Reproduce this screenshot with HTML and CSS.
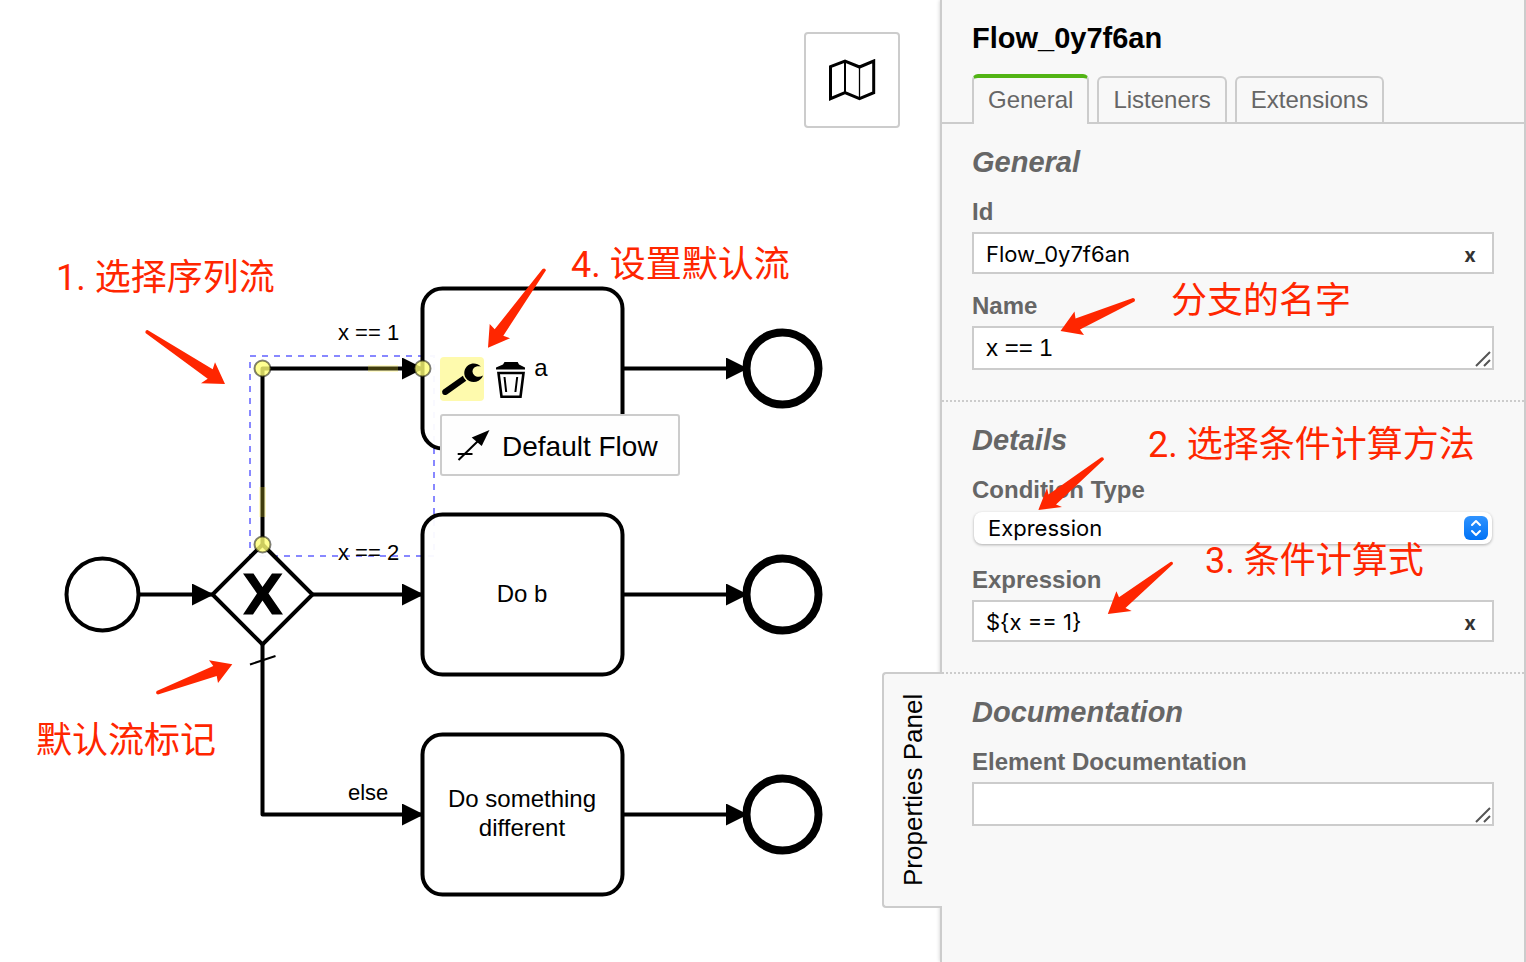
FILE: index.html
```html
<!DOCTYPE html>
<html lang="zh-CN">
<head>
<meta charset="utf-8">
<title>Process Modeler</title>
<link rel="stylesheet" href="styles.css">
</head>
<body>
<div class="modeler">
  <main class="canvas">
    <svg class="diagram" width="940" height="962" viewBox="0 0 940 962" role="img" aria-label="Process diagram">
      <defs>
        <marker id="flow-end" viewBox="0 0 22 22" refX="20" refY="11" markerWidth="22" markerHeight="22" markerUnits="userSpaceOnUse" orient="auto">
          <path d="M0 0L22 11L0 22z"/>
        </marker>
      </defs>
      <rect class="outline" x="250" y="356" width="184" height="200"/>
      <g class="shape">
        <circle cx="102.500" cy="594.500" r="36"/>
        <path d="M262.500 544.500l50 50l-50 50l-50-50z"/>
        <rect x="422.500" y="288.500" width="200" height="160" rx="20"/>
        <rect x="422.500" y="514.500" width="200" height="160" rx="20"/>
        <rect x="422.500" y="734.500" width="200" height="160" rx="20"/>
      </g>
      <g class="shape shape-end">
        <circle cx="782.500" cy="368.500" r="36"/>
        <circle cx="782.500" cy="594.500" r="36"/>
        <circle cx="782.500" cy="814.500" r="36"/>
      </g>
      <path d="M243 573.500h10.500l9 13.500l9.500-13.500h10.500L268.500 593.500L283 614.500H272L262.500 600.500L253 614.500H243L257 593.500z"/>
      <g class="flow">
        <path d="M140 594.500H212"/>
        <path d="M262.500 544.500V368.500H422"/>
        <path d="M312.500 594.500H422"/>
        <path d="M262.500 644.500V814.500H422"/>
        <path d="M622.500 368.500H746"/>
        <path d="M622.500 594.500H746"/>
        <path d="M622.500 814.500H746"/>
      </g>
      <path class="default-mark" d="M250 664.500L275.500 656"/>
      <rect class="dragger" x="368" y="365" width="30" height="7"/>
      <rect class="dragger" x="259" y="487" width="7" height="30"/>
      <g class="bendpoint">
        <circle cx="262.500" cy="368.500" r="8"/>
        <circle cx="422.500" cy="368.500" r="8"/>
        <circle cx="262.500" cy="544.500" r="8"/>
      </g>
      <g class="flow-label">
        <text x="338" y="340">x == 1</text>
        <text x="338" y="560">x == 2</text>
        <text x="348" y="800">else</text>
      </g>
      <g class="task-label">
        <text x="541" y="376">a</text>
        <text x="522" y="602">Do b</text>
        <text x="522" y="807">Do something</text>
        <text x="522" y="836">different</text>
      </g>
    </svg>

    <button class="minimap" type="button" aria-label="Open minimap">
      <svg width="48" height="42" viewBox="828 59 48 42">
        <path d="M830.500 66.700L845 61L859.500 67L873.700 61V92.700L859.500 98.700L845 92.700L830.500 98.700z" fill="none" stroke="#000" stroke-width="3"/>
        <path d="M845 61V93" stroke="#000" stroke-width="2"/><path d="M859.500 67V98" stroke="#000" stroke-width="1.300"/>
      </svg>
    </button>

    <div class="context-pad">
      <button class="entry entry-active" type="button" aria-label="Change type">
        <svg width="44" height="44" viewBox="440 357 44 44">
          <path d="M443 389.800L462.900 375.800Q463.800 378.800 466.300 380.700L447 394.500Q444 396 442.400 393.500Q441.500 391 443 389.800z"/>
          <path d="M480.900 366.400C477.500 363 472 362.600 468.200 365.200C464 368.200 463.200 374 465.800 378C468.500 382.200 474.300 383.300 478.600 380.800C481 379.400 482.500 377.500 482.900 375.600C480 377.300 476.500 377.200 474.300 375.200C472 373 471.900 370 473.800 368C475.500 366.200 478 365.800 480.900 366.400z"/>
        </svg>
      </button>
      <button class="entry" type="button" aria-label="Remove">
        <svg width="36" height="44" viewBox="492 357 36 44">
          <path d="M504.500 362H517.700L519 364.500L525 367.500V369.500H496V367.500L503 364.500z"/>
          <path d="M498.500 373H523.500L520.500 396.700H501.500z" fill="none" stroke="#000" stroke-width="2.600"/>
          <path d="M504.500 377L506.200 392M517.200 377L515.400 392" stroke="#000" stroke-width="2"/>
        </svg>
      </button>
    </div>

    <button class="popup" type="button">
      <svg width="34" height="34" viewBox="456 430 34 34">
        <path d="M458.500 460L478 441M457.700 454H472.500" fill="none" stroke="#000" stroke-width="2"/>
        <path d="M489.500 430L471.700 437.500L481.700 446z"/>
      </svg>
      <span>Default Flow</span>
    </button>

    <svg class="notes" width="940" height="962" viewBox="0 0 940 962">
      <path d="M147.500 330L212.700 369.300L215 362.300L225 384L201 383.300L207.700 378.700L145.500 333Q145 330 147.500 330z"/>
      <path d="M546 270.300L503.300 335.700L510 338.300L488 347.700L489.700 324L494.700 329.300L542.500 269Q545 267.500 546 270.300z"/>
      <path d="M156.700 691L213.300 666L209 660.300L232.300 664.300L218 683L216.700 676L158 694.500Q155 693.500 156.700 691z"/>
      <text x="56" y="290">1. 选择序列流</text>
      <text x="571" y="277">4. 设置默认流</text>
      <text x="36" y="753">默认流标记</text>
    </svg>
  </main>

  <aside class="panel">
    <button class="panel-toggle" type="button">Properties Panel</button>
    <h1 class="panel-title">Flow_0y7f6an</h1>
    <nav class="tabs">
      <a class="tab tab-active" href="#general">General</a>
      <a class="tab" href="#listeners">Listeners</a>
      <a class="tab" href="#extensions">Extensions</a>
    </nav>
    <form>
      <section class="group">
        <h2>General</h2>
        <div class="field">
          <label for="flow-id">Id</label>
          <div class="control">
            <input id="flow-id" type="text" value="Flow_0y7f6an">
            <button class="clear" type="button" aria-label="Clear id">x</button>
          </div>
        </div>
        <div class="field">
          <label for="flow-name">Name</label>
          <div class="control">
            <textarea id="flow-name" rows="1">x == 1</textarea>
            <svg class="grip" width="16" height="16" viewBox="0 0 16 16"><path d="M1 15L15 1M9 15L15 9"/></svg>
          </div>
        </div>
      </section>
      <section class="group">
        <h2>Details</h2>
        <div class="field">
          <label for="condition-type">Condition Type</label>
          <div class="control control-select">
            <select id="condition-type"><option>Expression</option></select>
            <svg class="stepper" width="24" height="24" viewBox="0 0 24 24"><path d="M8 9L12 5L16 9M8 15L12 19L16 15"/></svg>
          </div>
        </div>
        <div class="field">
          <label for="expression">Expression</label>
          <div class="control">
            <input id="expression" type="text" value="${x == 1}">
            <button class="clear" type="button" aria-label="Clear expression">x</button>
          </div>
        </div>
      </section>
      <section class="group">
        <h2>Documentation</h2>
        <div class="field">
          <label for="documentation">Element Documentation</label>
          <div class="control">
            <textarea id="documentation" rows="1"></textarea>
            <svg class="grip" width="16" height="16" viewBox="0 0 16 16"><path d="M1 15L15 1M9 15L15 9"/></svg>
          </div>
        </div>
      </section>
    </form>
    <svg class="notes" width="582" height="962" viewBox="942 0 582 962">
      <path d="M1134.500 301.500L1080 329.500L1084 335L1060.500 331L1074.500 311.500L1075.500 318.500L1133 298Q1136 298.500 1134.500 301.500z"/>
      <path d="M1104 459.500L1056 504.500L1062 507L1038.300 510L1047 488L1048.500 494.500L1101 457.500Q1103.500 456.500 1104 459.500z"/>
      <path d="M1173 564L1125.500 608L1131.700 611L1107.800 614L1116.400 591.300L1119 597.300L1170.500 562Q1173 561 1173 564z"/>
      <text x="1171" y="313">分支的名字</text>
      <text x="1148" y="457">2. 选择条件计算方法</text>
      <text x="1205" y="573">3. 条件计算式</text>
    </svg>
  </aside>
</div>
</body>
</html>
```

FILE: styles.css
```css
* { box-sizing: border-box; }

body {
  margin: 0;
  background: #fff;
  color: #000;
  font-family: "Liberation Sans", Arial, sans-serif;
}

button {
  margin: 0;
  padding: 0;
  border: 0;
  background: none;
  color: inherit;
  font: inherit;
}

.modeler {
  display: flex;
  min-height: 100vh;
}

/* Canvas */
.canvas {
  position: relative;
  flex: 1;
  min-width: 0;
  overflow: hidden;
}

.diagram {
  position: absolute;
  top: 0;
  left: 0;
}

.outline {
  fill: none;
  stroke: #8888ff;
  stroke-width: 2;
  stroke-dasharray: 6 6;
}

.shape {
  fill: #fff;
  fill-opacity: 0.95;
  stroke: #000;
  stroke-width: 4;
}

.shape-end { stroke-width: 8; }

.flow path {
  fill: none;
  stroke: #000;
  stroke-width: 4;
  stroke-linejoin: round;
  marker-end: url(#flow-end);
}

.default-mark {
  stroke: #000;
  stroke-width: 2;
}

.dragger {
  fill: #ffee33;
  fill-opacity: 0.25;
}

.bendpoint {
  fill: #ffff77;
  fill-opacity: 0.8;
  stroke: #000;
  stroke-opacity: 0.5;
  stroke-width: 2;
}

.flow-label { font-size: 22px; }

.task-label {
  font-size: 24px;
  text-anchor: middle;
}

.minimap {
  position: absolute;
  top: 32px;
  right: 40px;
  display: flex;
  align-items: center;
  justify-content: center;
  width: 96px;
  height: 96px;
  border: 2px solid #ccc;
  border-radius: 4px;
  background: #fff;
}

.context-pad {
  position: absolute;
  top: 357px;
  left: 440px;
  display: flex;
  gap: 8px;
}

.entry {
  display: flex;
  border-radius: 4px;
}

.entry-active { background: #fefaad; }

.popup {
  position: absolute;
  top: 414px;
  left: 440px;
  display: flex;
  align-items: center;
  gap: 12px;
  padding: 14px 20px 10px 14px;
  border: 2px solid #ccc;
  border-radius: 3px;
  background: #fefefe;
  font-size: 28px;
  line-height: 34px;
}

.notes {
  position: absolute;
  top: 0;
  left: 0;
  fill: #ff2600;
  font-family: Roboto, "Noto Sans CJK SC", sans-serif;
  font-size: 36px;
  font-weight: 400;
  pointer-events: none;
}

/* Properties panel */
.panel {
  position: relative;
  flex: 0 0 586px;
  border: 2px solid #ccc;
  border-width: 0 2px;
  background: #f8f8f8;
  box-shadow: 0 0 4px #ccc;
}

.panel-toggle {
  position: absolute;
  top: 672px;
  left: -60px;
  display: flex;
  align-items: center;
  justify-content: center;
  width: 60px;
  height: 236px;
  border: 2px solid #ccc;
  border-left: 0;
  border-radius: 0 4px 4px 0;
  background: #f8f8f8;
  font-size: 26px;
  writing-mode: vertical-rl;
  transform: rotate(180deg);
}

.panel-title {
  margin: 0;
  padding: 22px 30px 20px;
  font-size: 29px;
  line-height: 32px;
}

.tabs {
  display: flex;
  align-items: flex-end;
  gap: 8px;
  padding: 0 30px;
  border-bottom: 2px solid #ccc;
}

.tab {
  padding: 9px 14px;
  border: 2px solid #ccc;
  border-bottom: 0;
  border-radius: 6px 6px 0 0;
  background: #f8f8f8;
  color: #666;
  font-size: 24px;
  line-height: 26px;
  text-decoration: none;
}

.tab-active {
  margin-bottom: -2px;
  padding-bottom: 11px;
  border-top: 4px solid #52b415;
}

.group {
  padding: 22px 30px 30px;
}

.group + .group { border-top: 2px dotted #ccc; }

.group h2 {
  margin: 0 0 20px;
  color: #666;
  font-size: 29px;
  font-style: italic;
  line-height: 32px;
}

.field + .field { margin-top: 18px; }

.field label {
  display: block;
  margin-bottom: 6px;
  color: #666;
  font-size: 24px;
  font-weight: bold;
  line-height: 28px;
}

.control {
  position: relative;
  display: flex;
}

.control input,
.control textarea {
  width: 100%;
  margin: 0;
  border: 2px solid #ccc;
  border-radius: 0;
  background: #fff;
  color: #000;
}

.control input {
  height: 42px;
  padding: 2px 40px 0 12px;
  font: 22px Inter, sans-serif;
}

.control textarea {
  height: 44px;
  padding: 0 12px;
  font: 24px/40px "Liberation Sans", Arial, sans-serif;
  resize: none;
  overflow: hidden;
}

.clear {
  position: absolute;
  top: 3px;
  right: 8px;
  width: 32px;
  height: 40px;
  color: #333;
  font: 700 20px/40px Inter, sans-serif;
}

.grip {
  position: absolute;
  right: 3px;
  bottom: 3px;
  fill: none;
  stroke: #555;
  stroke-width: 2;
}

.control-select { padding: 2px 2px 4px; }

.control select {
  appearance: none;
  width: 100%;
  height: 32px;
  padding: 0 40px 0 14px;
  border: 0;
  border-radius: 8px;
  background: #fff;
  box-shadow: 0 1px 3px rgba(0, 0, 0, 0.3);
  color: #000;
  font: 22px Inter, sans-serif;
}

.stepper {
  position: absolute;
  top: 6px;
  right: 6px;
  border-radius: 6px;
  background: linear-gradient(#2f93ff, #0072f5);
  fill: none;
  stroke: #fff;
  stroke-width: 2;
  stroke-linecap: round;
  stroke-linejoin: round;
  pointer-events: none;
}
```
